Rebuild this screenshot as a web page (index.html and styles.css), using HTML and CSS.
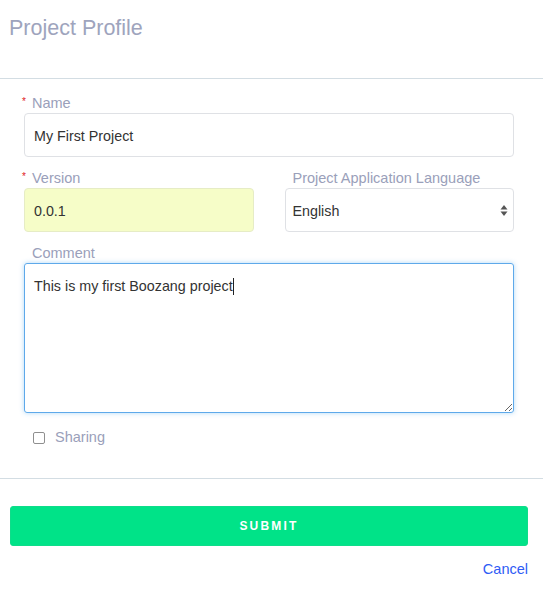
FILE: index.html
```html
<!DOCTYPE html>
<html lang="en">
<head>
<meta charset="utf-8">
<title>Project Profile</title>
<link rel="stylesheet" href="styles.css">
</head>
<body>
<div class="panel">
  <header class="header">
    <h1 class="title">Project Profile</h1>
  </header>
  <form class="form">
    <div class="group">
      <label class="label"><span class="req">*</span>Name</label>
      <div class="input">My First Project</div>
    </div>
    <div class="row">
      <div class="group">
        <label class="label"><span class="req">*</span>Version</label>
        <div class="input input-hl">0.0.1</div>
      </div>
      <div class="group">
        <label class="label">Project Application Language</label>
        <div class="input select">
          <span>English</span>
          <svg class="arrows" width="8" height="13" viewBox="0 0 8 13"><path d="M4 1 L7.5 5.5 L0.5 5.5 Z" fill="#555"/><path d="M4 12 L7.5 7.5 L0.5 7.5 Z" fill="#555"/></svg>
        </div>
      </div>
    </div>
    <div class="group">
      <label class="label">Comment</label>
      <div class="textarea">This is my first Boozang project<span class="caret"></span></div>
    </div>
    <div class="check-row">
      <span class="checkbox"></span>
      <span class="check-label">Sharing</span>
    </div>
  </form>
  <footer class="footer">
    <button class="submit" type="button">SUBMIT</button>
    <div class="cancel-row"><a class="cancel">Cancel</a></div>
  </footer>
</div>
</body>
</html>
```
FILE: styles.css
```css
* { box-sizing: border-box; }
html, body { margin: 0; padding: 0; background: #fff; }
body { font-family: "Liberation Sans", Arial, Helvetica, sans-serif; }

.header {
  padding: 16px 9px 38px;
  border-bottom: 1px solid #d3dde3;
}
.title {
  margin: 0;
  font-size: 21.5px;
  line-height: 24px;
  font-weight: normal;
  color: #9ea4bd;
}

.form {
  padding: 16px 29px 0 24px;
  height: 400px;
  border-bottom: 1px solid #d3dde3;
}
.group { margin-bottom: 13px; }
.label {
  display: block;
  position: relative;
  padding-left: 8px;
  font-size: 14.5px;
  line-height: 17px;
  margin-bottom: 1px;
  color: #9aa0ba;
}
.req {
  display: inline-block;
  width: 10px;
  margin-left: -10px;
  color: #e0201c;
  font-size: 10px;
  vertical-align: top;
  line-height: 14px;
}
.input {
  height: 44px;
  border: 1px solid #dfe1e5;
  border-radius: 4px;
  padding: 1px 9px 0;
  display: flex;
  align-items: center;
  font-size: 14.3px;
  color: #333;
  background: #fff;
}
.input-hl {
  background: #f6fdc8;
  border-color: #e6ecc6;
}
.select {
  justify-content: space-between;
  padding-left: 7px;
  padding-right: 5px;
}
.arrows { display: block; }

.row {
  display: grid;
  grid-template-columns: 1fr 1fr;
  column-gap: 31px;
}

.textarea {
  height: 150px;
  border: 1px solid #5ea9ea;
  border-radius: 3px;
  box-shadow: 0 0 5px rgba(82, 168, 236, 0.45);
  padding: 14px 9px 12px;
  font-size: 14.3px;
  line-height: 17px;
  color: #333;
  resize: both;
  overflow: auto;
}
.caret {
  display: inline-block;
  width: 1px;
  height: 17px;
  background: #222;
  vertical-align: top;
}

.check-row {
  display: flex;
  align-items: center;
  margin-top: 16px;
  padding-left: 9px;
}
.checkbox {
  width: 12px;
  height: 12px;
  border: 1px solid #8f8f8f;
  border-radius: 2px;
  background: #fff;
}
.check-label {
  margin-left: 10px;
  font-size: 14.5px;
  line-height: 17px;
  color: #9aa0ba;
}

.footer {
  padding: 27px 15px 0 10px;
}
.submit {
  display: block;
  width: 100%;
  height: 40px;
  border: 1px solid #0fdc8a;
  border-radius: 3px;
  background: #00e388;
  color: #fff;
  font-family: "Liberation Sans", Arial, sans-serif;
  font-weight: bold;
  font-size: 12px;
  letter-spacing: 2.2px;
  padding: 0;
}
.cancel-row {
  margin-top: 14px;
  text-align: right;
}
.cancel {
  font-size: 14.5px;
  line-height: 17px;
  color: #2f5cf5;
  cursor: pointer;
}
```
